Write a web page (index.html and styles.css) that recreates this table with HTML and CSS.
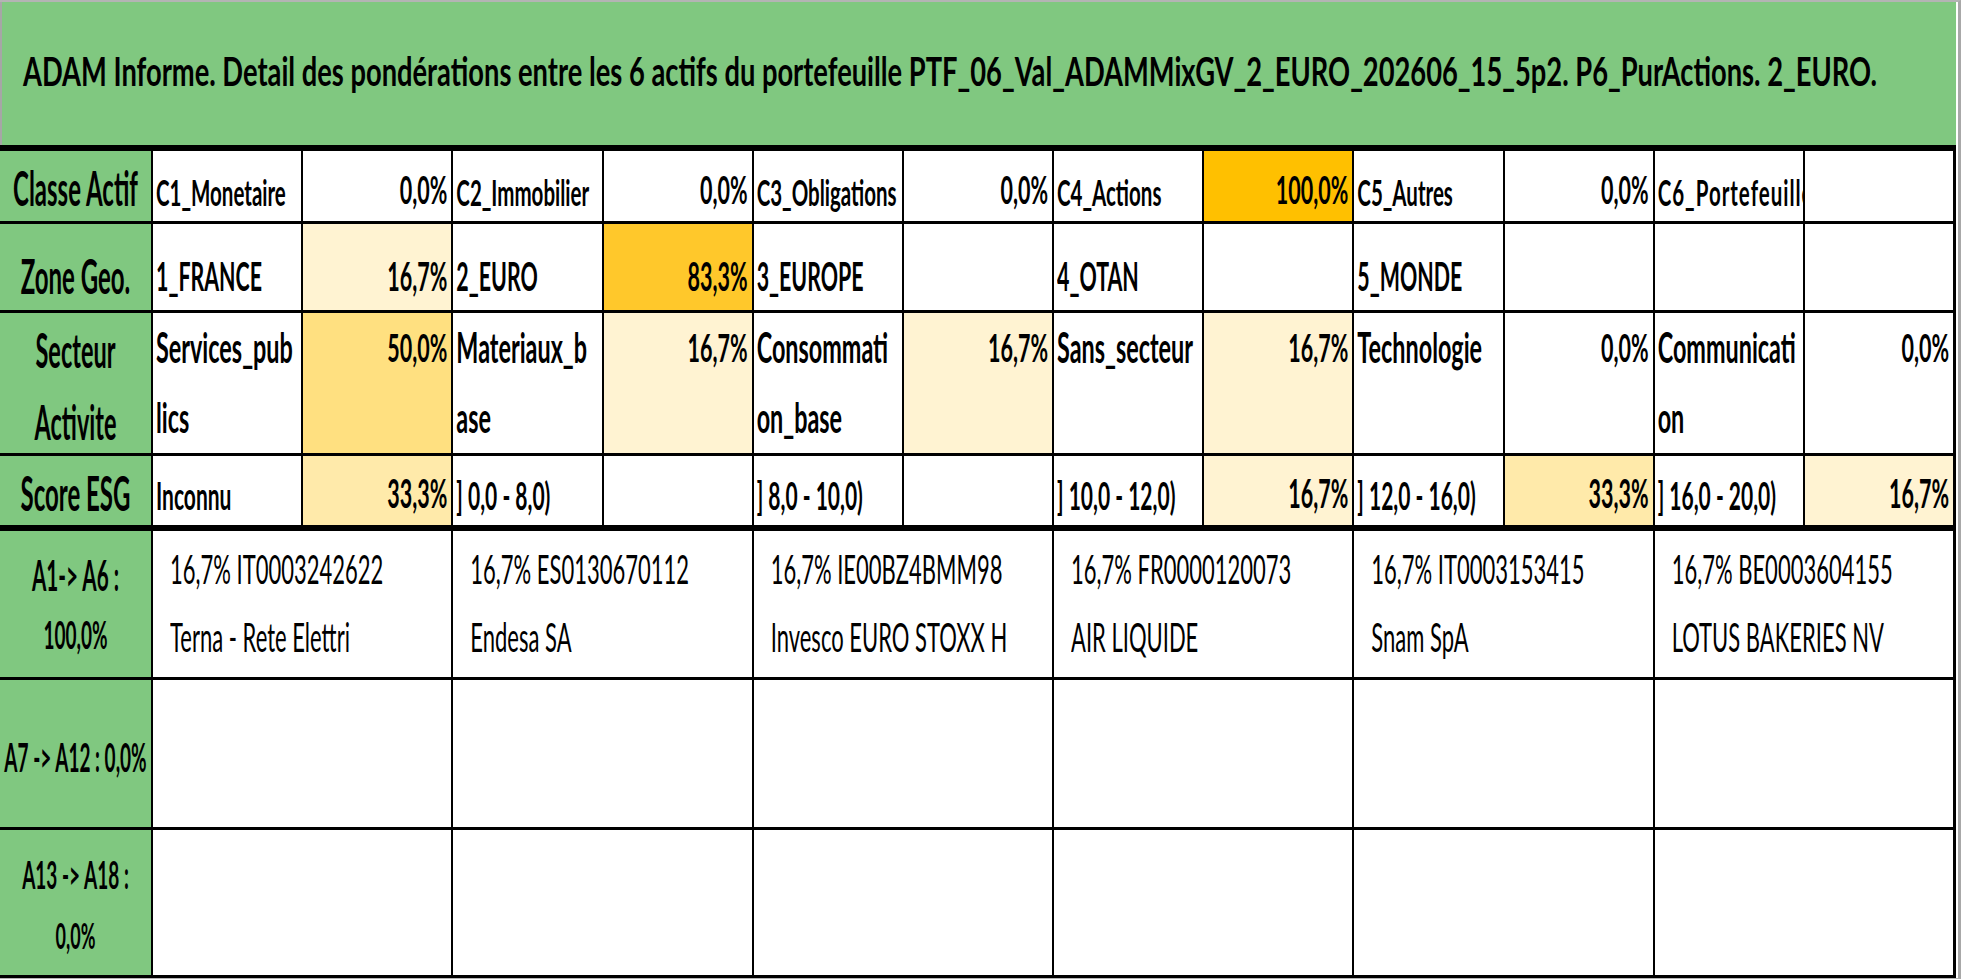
FILE: index.html
```html
<!DOCTYPE html>
<html lang="fr">
<head>
<meta charset="utf-8">
<title>ADAM Informe</title>
<link rel="stylesheet" href="styles.css">
</head>
<body>
<div class="sheet">
  <div class="title"><span class="t">ADAM Informe. Detail des pondérations entre les 6 actifs du portefeuille PTF_06_Val_ADAMMixGV_2_EURO_202606_15_5p2. P6_PurActions. 2_EURO.</span></div>
  <div class="table">
    <div class="row r1">
      <div class="lab"><span class="t">Classe Actif</span></div>
      <div class="txt"><span class="t">C1_Monetaire</span></div>
      <div class="pct"><span class="t">0,0%</span></div>
      <div class="txt"><span class="t">C2_Immobilier</span></div>
      <div class="pct"><span class="t">0,0%</span></div>
      <div class="txt"><span class="t">C3_Obligations</span></div>
      <div class="pct"><span class="t">0,0%</span></div>
      <div class="txt"><span class="t">C4_Actions</span></div>
      <div class="pct f100"><span class="t">100,0%</span></div>
      <div class="txt"><span class="t">C5_Autres</span></div>
      <div class="pct"><span class="t">0,0%</span></div>
      <div class="txt"><span class="t wide">C6_Portefeuille</span></div>
      <div class="pct"></div>
    </div>
    <div class="row r2">
      <div class="lab"><span class="t">Zone Geo.</span></div>
      <div class="txt"><span class="t">1_FRANCE</span></div>
      <div class="pct f17"><span class="t">16,7%</span></div>
      <div class="txt"><span class="t">2_EURO</span></div>
      <div class="pct f83"><span class="t">83,3%</span></div>
      <div class="txt"><span class="t">3_EUROPE</span></div>
      <div class="pct"></div>
      <div class="txt"><span class="t">4_OTAN</span></div>
      <div class="pct"></div>
      <div class="txt"><span class="t">5_MONDE</span></div>
      <div class="pct"></div>
      <div class="txt"></div>
      <div class="pct"></div>
    </div>
    <div class="row r3">
      <div class="lab"><span class="t">Secteur<br>Activite</span></div>
      <div class="txt"><span class="t">Services_pub<br>lics</span></div>
      <div class="pct f50"><span class="t">50,0%</span></div>
      <div class="txt"><span class="t">Materiaux_b<br>ase</span></div>
      <div class="pct f17"><span class="t">16,7%</span></div>
      <div class="txt"><span class="t">Consommati<br>on_base</span></div>
      <div class="pct f17"><span class="t">16,7%</span></div>
      <div class="txt"><span class="t">Sans_secteur</span></div>
      <div class="pct f17"><span class="t">16,7%</span></div>
      <div class="txt"><span class="t">Technologie</span></div>
      <div class="pct"><span class="t">0,0%</span></div>
      <div class="txt"><span class="t">Communicati<br>on</span></div>
      <div class="pct"><span class="t">0,0%</span></div>
    </div>
    <div class="row r4">
      <div class="lab"><span class="t">Score ESG</span></div>
      <div class="txt"><span class="t">Inconnu</span></div>
      <div class="pct f33"><span class="t">33,3%</span></div>
      <div class="txt"><span class="t">] 0,0 - 8,0)</span></div>
      <div class="pct"></div>
      <div class="txt"><span class="t">] 8,0 - 10,0)</span></div>
      <div class="pct"></div>
      <div class="txt"><span class="t">] 10,0 - 12,0)</span></div>
      <div class="pct f17"><span class="t">16,7%</span></div>
      <div class="txt"><span class="t">] 12,0 - 16,0)</span></div>
      <div class="pct f33"><span class="t">33,3%</span></div>
      <div class="txt"><span class="t">] 16,0 - 20,0)</span></div>
      <div class="pct f17"><span class="t">16,7%</span></div>
    </div>
    <div class="row assets first">
      <div class="lab"><span class="t">A1-&gt; A6 :<br><span class="small">100,0%</span></span></div>
      <div class="asset"><span class="t">16,7% IT0003242622<br>Terna - Rete Elettri</span></div>
      <div class="asset"><span class="t">16,7% ES0130670112<br>Endesa SA</span></div>
      <div class="asset"><span class="t">16,7% IE00BZ4BMM98<br>Invesco EURO STOXX H</span></div>
      <div class="asset"><span class="t">16,7% FR0000120073<br>AIR LIQUIDE</span></div>
      <div class="asset"><span class="t">16,7% IT0003153415<br>Snam SpA</span></div>
      <div class="asset"><span class="t">16,7% BE0003604155<br>LOTUS BAKERIES NV</span></div>
    </div>
    <div class="row assets mid">
      <div class="lab"><span class="t">A7 -&gt; A12 : 0,0%</span></div>
      <div class="asset"></div>
      <div class="asset"></div>
      <div class="asset"></div>
      <div class="asset"></div>
      <div class="asset"></div>
      <div class="asset"></div>
    </div>
    <div class="row assets last">
      <div class="lab"><span class="t">A13 -&gt; A18 :<br><span class="small">0,0%</span></span></div>
      <div class="asset"></div>
      <div class="asset"></div>
      <div class="asset"></div>
      <div class="asset"></div>
      <div class="asset"></div>
      <div class="asset"></div>
    </div>
  </div>
</div>
</body>
</html>
```

FILE: styles.css
```css
html, body {
  margin: 0;
  padding: 0;
  background: #ffffff;
}

body {
  font-family: Lato, "Liberation Sans", "DejaVu Sans", sans-serif;
  color: #000;
}

.sheet {
  width: 1961px;
  height: 979px;
  box-sizing: border-box;
  border-top: 2px solid #b4b4b4;
  border-right: 3px solid #a8a8a8;
  border-bottom: 1px solid #b4b4b4;
  overflow: hidden;
  background: #fff;
}

.t {
  display: inline-block;
  white-space: nowrap;
}

/* Title */
.title {
  height: 143px;
  box-sizing: border-box;
  background: #80c880;
  border-left: 2px solid #a6a6a6;
  margin-right: 2px;
  display: flex;
  align-items: center;
  padding-left: 21px;
  padding-bottom: 4px;
}

.title .t {
  font-weight: 700;
  font-size: 27.3px;
  line-height: 1.2;
  transform: scaleY(1.49);
  transform-origin: 0 50%;
}

/* Table */
.table {
  width: 1956px;
  background: #000;
  box-sizing: border-box;
  border-top: 6px solid #000;
  border-right: 3px solid #000;
  border-bottom: 3px solid #000;
  display: flex;
  flex-direction: column;
  gap: 3px;
}

.row {
  display: grid;
  grid-template-columns: 151px repeat(12, 1fr);
  column-gap: 2px;
  background: #000;
}

.row > div {
  background: #fff;
  overflow: hidden;
  display: flex;
  box-sizing: border-box;
}

.r1 { height: 70px; }
.r2 { height: 86px; }
.r3 { height: 140px; }
.r4 { height: 69px; }

.row.assets {
  grid-template-columns: 151px repeat(6, 1fr);
}
.assets.first { height: 146px; margin-top: 3px; }
.assets.mid { height: 147px; }
.assets.last { height: 145px; }

/* Label column */
.row > .lab {
  background: #80c880;
  justify-content: center;
  align-items: center;
  text-align: center;
}

.lab .t {
  font-weight: 700;
  font-size: 24px;
  line-height: 1;
  transform: scaleY(1.97);
  transform-origin: 50% 50%;
}

.r1 .lab { padding-top: 4px; }
.r2 .lab { padding-top: 17px; }
.r3 .lab { padding-top: 6px; }
.r3 .lab .t { font-size: 23.5px; line-height: 35.5px; transform: scaleY(2); }
.r4 .lab { padding-top: 4px; }

.assets .lab .t {
  font-size: 20.7px;
  line-height: 28.5px;
  transform: scaleY(2);
}
.assets .lab .small { font-size: 19px; }
.assets.first .lab { padding-top: 2px; }
.assets.mid .lab { padding-top: 5px; }
.assets.mid .lab .t { font-size: 19px; line-height: 1; transform: scaleY(2.1); }
.assets.last .lab { padding-top: 5px; }
.assets.last .lab .t { font-size: 19px; line-height: 30px; transform: scaleY(2); }
.assets.last .lab .small { font-size: 18px; }

/* Value cells */
.txt {
  padding-left: 3px;
  align-items: flex-end;
}
.pct {
  padding-right: 4px;
  justify-content: flex-end;
  align-items: flex-end;
}

.txt .t, .pct .t {
  font-weight: 700;
  line-height: 1;
  transform-origin: 50% 100%;
}
.pct .t { font-size: 21.5px; }

.r1 .txt .t { font-size: 20.5px; transform: scaleY(1.77); }
.r1 .txt .wide { letter-spacing: 1px; transform-origin: 0 100%; }
.r1 .pct .t { transform: scaleY(1.77); }
.r1 .txt, .r1 .pct { padding-bottom: 11px; }

.r2 .txt .t { font-size: 21.4px; transform: scaleY(1.83); }
.r2 .pct .t { transform: scaleY(1.83); }
.r2 .txt, .r2 .pct { padding-bottom: 13px; }

.r3 .txt, .r3 .pct { align-items: flex-start; padding-top: 0; }
.r3 .txt .t {
  font-size: 23.4px;
  line-height: 38.5px;
  transform: scaleY(1.79);
  transform-origin: 0 0;
}
.r3 .pct .t {
  line-height: 38.5px;
  transform: scaleY(1.8);
  transform-origin: 0 0;
}

.r4 .txt .t { font-size: 21px; transform: scaleY(1.86); }
.r4 .pct .t { transform: scaleY(1.82); }
.r4 .txt, .r4 .pct { padding-bottom: 11px; }

/* Fills */
.row > .f100 { background: #ffc000; }
.row > .f83 { background: #ffc82b; }
.row > .f50 { background: #ffe080; }
.row > .f33 { background: #ffeaaa; }
.row > .f17 { background: #fff3d2; }

/* Asset cells */
.asset {
  padding-left: 17px;
  align-items: flex-start;
  padding-top: 4px;
}
.asset .t {
  font-weight: 400;
  font-size: 22px;
  line-height: 37.8px;
  transform: scaleY(1.8);
  transform-origin: 0 0;
}
```
